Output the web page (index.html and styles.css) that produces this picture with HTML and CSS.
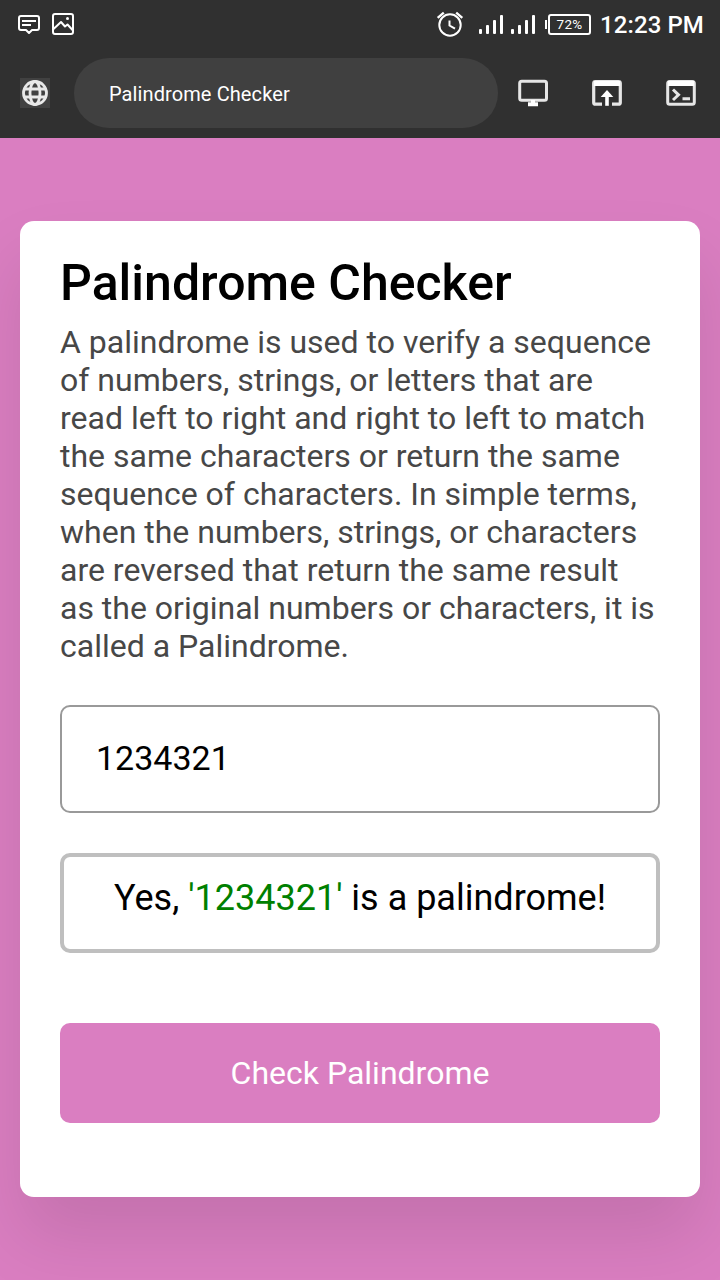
FILE: index.html
```html
<!DOCTYPE html>
<html lang="en">
<head>
<meta charset="utf-8">
<title>Palindrome Checker</title>
<link rel="stylesheet" href="styles.css">
</head>
<body>
<header class="chrome">
  <div class="status">
    <svg class="chat" width="24" height="24" viewBox="0 0 24 24" fill="none" stroke="#fff" stroke-width="2" stroke-linejoin="round">
      <path d="M4 4H20Q22 4 22 6V16Q22 18 20 18H15L12 21L9 18H4Q2 18 2 16V6Q2 4 4 4Z"/>
      <path d="M5 9H19M5 13H14" stroke-width="1.8"/>
    </svg>
    <svg class="photo" width="24" height="24" viewBox="0 0 24 24" fill="none" stroke="#fff" stroke-width="2" stroke-linejoin="round">
      <rect x="2" y="2" width="20" height="20" rx="2"/>
      <path d="M2.500 17L10 10L14 14.500L16.500 12.500L22 18.500"/>
      <circle cx="16.500" cy="6.500" r="1.500" fill="#fff" stroke="none"/>
    </svg>
    <svg class="alarm" width="28" height="28" viewBox="0 0 28 28" fill="none" stroke="#fff" stroke-width="2">
      <circle cx="14" cy="15" r="10.700"/>
      <path d="M1.700 7.800L7.800 2.700M26.300 7.800L20.200 2.700" stroke-width="2.400"/>
      <path d="M13.500 10.500V15.500L19 18.700"/>
    </svg>
    <svg class="signal" width="24" height="20" viewBox="0 0 24 20" fill="#fff">
      <rect y="14" width="3" height="5" rx="1"/><rect x="7" y="10" width="3" height="9" rx="1"/><rect x="14" y="5" width="3" height="14" rx="1"/><rect x="21" width="3" height="19" rx="1"/>
    </svg>
    <svg class="signal-two" width="24" height="20" viewBox="0 0 24 20" fill="#fff">
      <rect y="14" width="3" height="5" rx="1"/><rect x="7" y="10" width="3" height="9" rx="1"/><rect x="14" y="5" width="3" height="14" rx="1"/><rect x="21" width="3" height="19" rx="1"/>
    </svg>
    <span class="battery-tip"></span>
    <span class="battery">72%</span>
    <span class="clock">12:23 PM</span>
  </div>
  <div class="toolbar">
    <span class="globe">
      <svg width="30" height="30" viewBox="0 0 30 30" fill="none" stroke="#e9e9e9" stroke-width="2.800">
        <circle cx="15" cy="15" r="11.500"/>
        <ellipse cx="15" cy="15" rx="5" ry="11.500"/>
        <path d="M4 11H26M4 19H26"/>
      </svg>
    </span>
    <div class="address">Palindrome Checker</div>
    <svg class="tool" width="32" height="32" viewBox="0 0 32 32" fill="none" stroke="#e6e6e6" stroke-width="3">
      <rect x="2.700" y="4.200" width="26.800" height="19" rx="2"/>
      <path d="M16 23V27M11 27.300H21" stroke="#fff" stroke-width="4"/>
    </svg>
    <svg class="tool" width="32" height="32" viewBox="0 0 32 32" fill="none" stroke="#e6e6e6" stroke-width="3.200">
      <path d="M11 27.200H4.500Q2.700 27.200 2.700 25.400V6.300Q2.700 4.500 4.500 4.500H27.500Q29.300 4.500 29.300 6.300V25.400Q29.300 27.200 27.500 27.200H21"/>
      <path d="M3 6.500H29" stroke="#fff" stroke-width="5"/>
      <path d="M16 28.800V17" stroke="#fff" stroke-width="3.600"/>
      <path d="M9.700 20L16 13L22.300 20Z" fill="#fff" stroke="none"/>
    </svg>
    <svg class="tool" width="32" height="32" viewBox="0 0 32 32" fill="none" stroke="#e6e6e6" stroke-width="3">
      <rect x="2.700" y="4.600" width="26.600" height="22.600" rx="2"/>
      <path d="M3 6.500H29" stroke="#fff" stroke-width="5"/>
      <path d="M8 12.500L13.500 17.800L8 23M17.500 21.800H25"/>
    </svg>
  </div>
</header>
<main class="page">
  <section class="card">
    <h1 class="title">Palindrome Checker</h1>
    <p class="intro">A palindrome is used to verify a sequence<br>of numbers, strings, or letters that are<br>read left to right and right to left to match<br>the same characters or return the same<br>sequence of characters. In simple terms,<br>when the numbers, strings, or characters<br>are reversed that return the same result<br>as the original numbers or characters, it is<br>called a Palindrome.</p>
    <input class="entry" type="text" value="1234321" aria-label="Text to check">
    <p class="result">Yes, <span class="match">'1234321'</span> is a palindrome!</p>
    <button class="check">Check Palindrome</button>
  </section>
</main>
</body>
</html>
```

FILE: styles.css
```css
* { box-sizing: border-box; margin: 0; }
body {
  height: 1280px;
  display: flex;
  flex-direction: column;
  overflow: hidden;
  background: #da7ec1;
  font-family: Roboto, "Liberation Sans", sans-serif;
}
svg { display: block; flex: none; }
.chrome { height: 138px; flex: none; background: #303030; color: #fff; }
.status { height: 48px; display: flex; align-items: center; padding-left: 17px; }
.photo { margin-left: 10px; }
.alarm { margin-left: 361px; }
.signal { margin: 2px 0 0 15px; }
.signal-two { margin: 2px 0 0 8px; }
.battery-tip { width: 2px; height: 9px; margin-left: 10px; background: #fff; }
.battery {
  width: 43px;
  height: 21px;
  margin-left: 1px;
  border: 2px solid #fff;
  border-radius: 3px;
  font-size: 13.500px;
  letter-spacing: 0.3px;
  line-height: 16px;
  text-align: center;
}
.clock {
  margin: 2px 0 0 9px;
  font-size: 24px;
  font-weight: 500;
  letter-spacing: 0.1px;
  line-height: 28px;
  white-space: nowrap;
}
.toolbar { height: 90px; display: flex; align-items: center; padding-left: 20px; }
.globe { background: #414141; }
.address {
  width: 424px;
  height: 70px;
  margin: 0 19px 0 24px;
  padding-left: 35px;
  border-radius: 35px;
  background: #404040;
  font-size: 20px;
  letter-spacing: 0.1px;
  line-height: 72px;
}
.tool + .tool { margin-left: 42px; }
.page { flex: 1; padding: 83px 20px; }
.card {
  height: 976px;
  padding: 33px 40px 0;
  border-radius: 14px;
  background: #fff;
  box-shadow: 0 40px 70px rgba(0, 0, 0, 0.1);
}
.title { font-size: 50px; font-weight: 500; line-height: 59px; white-space: nowrap; }
.intro { margin-top: 10px; color: #474747; font-size: 32px; line-height: 38px; white-space: nowrap; }
.entry {
  display: block;
  width: 100%;
  height: 108px;
  margin-top: 40px;
  padding: 0 34px 2px;
  border: 2px solid #999;
  border-radius: 10px;
  background: #fff;
  color: #000;
  font: 34px Roboto, sans-serif;
}
.result {
  height: 100px;
  margin-top: 40px;
  padding-top: 20px;
  border: 4px solid #bfbfbf;
  border-radius: 10px;
  font-size: 36px;
  line-height: 42px;
  text-align: center;
}
.match { color: #008000; }
.check {
  display: block;
  width: 100%;
  height: 100px;
  margin-top: 70px;
  padding: 0;
  border: 0;
  border-radius: 10px;
  background: #da7ec1;
  color: #fff;
  font: 32px Roboto, sans-serif;
}
```
